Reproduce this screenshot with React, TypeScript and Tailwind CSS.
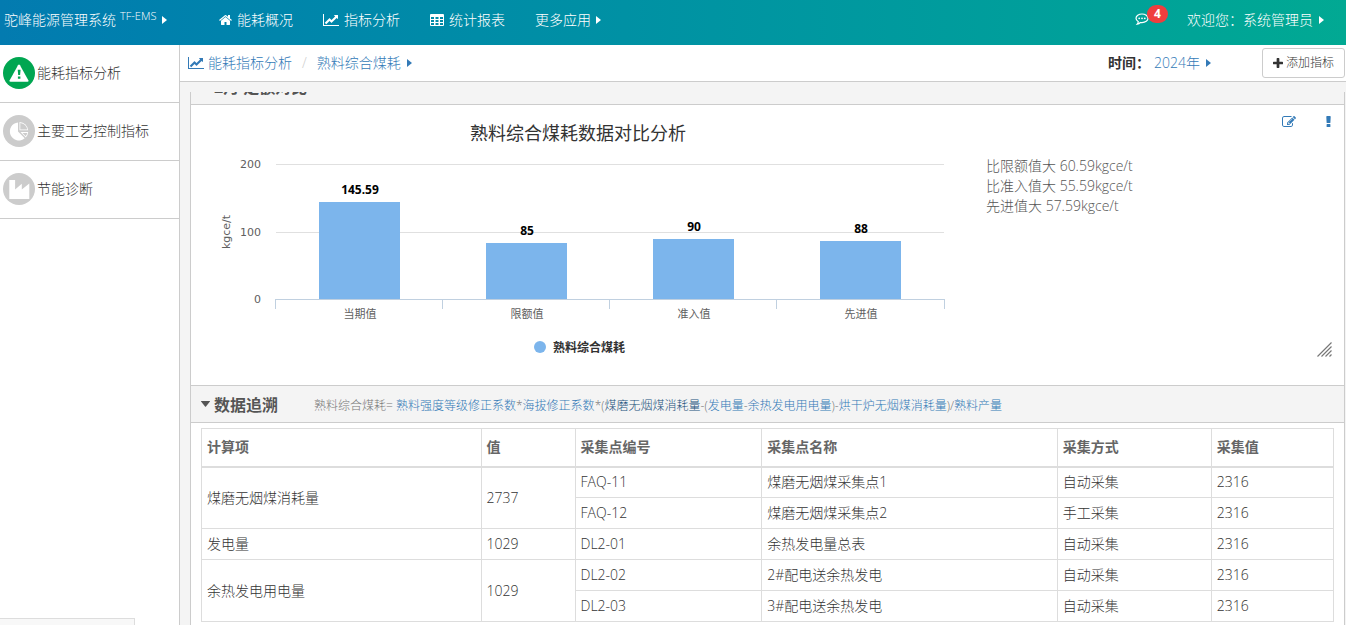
import type { ReactNode } from "react";

type IconProps = { className?: string };

function Glyph({ d, box, className = "" }: { d: string; box: string; className?: string }) {
  return (
    <svg viewBox={box} className={className} fill="currentColor" fillRule="evenodd" aria-hidden="true">
      <path d={d} />
    </svg>
  );
}

const HomeIcon = ({ className }: IconProps) => (
  <Glyph
    className={className}
    box="64 128 1664 1536"
    d="M1472 992v480q0 26-19 45t-45 19h-384v-384h-256v384h-384q-26 0-45-19t-19-45v-480q0-1 .5-3t.5-3l575-474 575 474q1 2 1 6zm223-69l-62 74q-8 9-21 11h-3q-13 0-21-7l-692-577-692 577q-12 8-24 7-13-2-21-11l-62-74q-8-10-7-23.5t11-21.5l719-599q32-26 76-26t76 26l244 204v-195q0-14 9-23t23-9h192q14 0 23 9t9 23v408l219 182q10 8 11 21.5t-7 23.5z"
  />
);
const LineChartIcon = ({ className }: IconProps) => (
  <Glyph
    className={className}
    box="0 128 2048 1536"
    d="M2048 1536v128h-2048v-1536h128v1408h1920zm-128-1248v435q0 21-19.5 29.5t-35.5-7.5l-121-121-633 633q-10 10-23 10t-23-10l-233-233-416 416-192-192 585-585q10-10 23-10t23 10l233 233 464-464-121-121q-16-16-7.5-35.5t29.5-19.5h435q14 0 23 9t9 23z"
  />
);
const TableIcon = ({ className }: IconProps) => (
  <Glyph
    className={className}
    box="0 0 14 12"
    d="M1 0h12a1 1 0 0 1 1 1v10a1 1 0 0 1-1 1H1a1 1 0 0 1-1-1V1a1 1 0 0 1 1-1zM1 3v2h3V3zM5.5 3v2h3V3zM10 3v2h3V3zM1 6v2h3V6zM5.500 6v2h3V6zM10 6v2h3V6zM1 9v2h3V9zM5.500 9v2h3V9zM10 9v2h3V9z"
  />
);
const EditIcon = ({ className }: IconProps) => (
  <Glyph
    className={className}
    box="0 128 1792 1408"
    d="M888 1184l116-116-152-152-116 116v56h96v96h56zm440-720q-16-16-33 1l-350 350q-17 17-1 33t33-1l350-350q17-17 1-33zm80 594v190q0 119-84.500 203.500t-203.500 84.500h-832q-119 0-203.500-84.500t-84.500-203.500v-832q0-119 84.500-203.500t203.500-84.500h832q63 0 117 25 15 7 18 23 3 17-9 29l-49 49q-14 14-32 8-23-6-45-6h-832q-66 0-113 47t-47 113v832q0 66 47 113t113 47h832q66 0 113-47t47-113v-126q0-13 9-22l64-64q15-15 35-7t20 29zm-96-738l288 288-672 672h-288v-288zm444 132l-92 92-288-288 92-92q28-28 68-28t68 28l152 152q28 28 28 68t-28 68z"
  />
);
const ExclamationIcon = ({ className }: IconProps) => (
  <Glyph
    className={className}
    box="0 0 5 11"
    d="M1 0h3q.7 0 .7.700l-.3 5.800q0 .5-.6.500H1.200q-.6 0-.6-.5L.3.700Q.3 0 1 0zM1.100 8h2.800q.5 0 .5.500v2q0 .5-.5.500H1.100q-.5 0-.5-.5v-2q0-.5.500-.5z"
  />
);
const PlusIcon = ({ className }: IconProps) => (
  <Glyph
    className={className}
    box="0 0 11 11"
    d="M4.700 0h1.600q.7 0 .7.700V4h3.300q.7 0 .7.700v1.600q0 .7-.7.700H7v3.300q0 .7-.7.700H4.700q-.7 0-.7-.7V7H.700Q0 7 0 6.300V4.700Q0 4 .7 4H4V.700Q4 0 4.700 0z"
  />
);
const CaretRight = ({ className = "" }: IconProps) => (
  <Glyph className={`h-2 w-[5px] ${className}`} box="0 0 5 8" d="M0 0l5 4-5 4z" />
);
const CaretDown = () => <Glyph className="h-[6px] w-[9px]" box="0 0 9 6" d="M.5 0h8q.5 0 .4.500L5 5.600q-.5.500-1 0L.1.500Q0 0 .5 0z" />;

const CommentIcon = () => (
  <svg viewBox="0 0 14 13" className="h-[13px] w-[14px]" aria-hidden="true">
    <path
      d="M7 1C3.700 1 1 2.900 1 5.300c0 1.400.9 2.600 2.300 3.400-.1.900-.5 1.700-1.100 2.400 1.300-.2 2.400-.8 3.200-1.600.5.100 1 .1 1.600.1 3.300 0 6-1.900 6-4.300S10.300 1 7 1z"
      fill="none"
      stroke="currentColor"
      strokeWidth="1.200"
    />
    <g fill="currentColor">
      <circle cx="4.200" cy="5.300" r=".9" />
      <circle cx="7" cy="5.300" r=".9" />
      <circle cx="9.800" cy="5.300" r=".9" />
    </g>
  </svg>
);

const WarningBadge = () => (
  <svg viewBox="0 0 32 32" className="size-8" aria-hidden="true">
    <circle cx="16" cy="16" r="16" fill="#00a651" />
    <path d="M15 8.200q1-1.600 2 0l8.300 15q.8 1.600-1 1.600H7.700q-1.800 0-1-1.600z" fill="#fff" />
    <path d="M14.700 12.800h2.900l-.5 5.200h-1.900zM14.900 19.500h2.500v2.300h-2.500z" fill="#00a651" />
  </svg>
);
const PieBadge = () => (
  <svg viewBox="0 0 32 32" className="size-8" aria-hidden="true">
    <circle cx="16" cy="16" r="16" fill="#ccc" />
    <path d="M15 7.500V16.500l6.700 6.800A9 9 0 1 1 15 7.500z" fill="#fff" />
    <path d="M16.500 7a9 9 0 0 1 8.700 8.300h-8.700z" fill="#fff" />
    <path d="M17.500 17h7.700a9 9 0 0 1-2.400 5.500z" fill="#fff" />
    <path d="M17.300 7.900a8 8 0 0 1 7 6.500h-7zM19.500 17.900h4.700a8 8 0 0 1-1.500 3.400z" fill="#ccc" />
  </svg>
);
const FactoryBadge = () => (
  <svg viewBox="0 0 32 32" className="size-8" aria-hidden="true">
    <circle cx="16" cy="16" r="16" fill="#ccc" />
    <path d="M6.300 7h5.800v9.500l6.700-5.700v5.700l7.500-6V26h-20z" fill="#fff" />
  </svg>
);

function NavLink({ icon, label, caret }: { icon?: ReactNode; label: string; caret?: boolean }) {
  return (
    <a href="#" className="flex items-center gap-[5px]">
      {icon}
      {label}
      {caret && <CaretRight />}
    </a>
  );
}

const sections = [
  { label: "能耗指标分析", icon: <WarningBadge /> },
  { label: "主要工艺控制指标", icon: <PieBadge /> },
  { label: "节能诊断", icon: <FactoryBadge /> },
];

const bars = [
  { label: "当期值", value: 145.59 },
  { label: "限额值", value: 85 },
  { label: "准入值", value: 90 },
  { label: "先进值", value: 88 },
];

const barHeight = (value: number) => Math.floor(value * 0.667);

function BarChart() {
  return (
    <svg
      viewBox="0 0 754 250"
      className="block w-full font-normal"
      role="img"
      aria-label="熟料综合煤耗数据对比分析"
      fontFamily="'DejaVu Sans', 'Noto Sans CJK SC', sans-serif"
      fontSize="11"
      fill="#606060"
    >
      <text x="377" y="25" textAnchor="middle" fontSize="18" fill="#333">
        熟料综合煤耗数据对比分析
      </text>
      {[200, 100, 0].map((tick) => (
        <g key={tick}>
          {tick > 0 && <path d={`M75 ${184.5 - tick * 0.675}H743`} stroke="#e0e0e0" shapeRendering="crispEdges" />}
          <text x="60" y={188 - tick * 0.675} textAnchor="end">
            {tick}
          </text>
        </g>
      ))}
      <text transform="translate(29 117) rotate(-90)" textAnchor="middle">
        kgce/t
      </text>
      {bars.map((bar, i) => (
        <g key={bar.label}>
          <rect x={118 + i * 167} y={184 - barHeight(bar.value)} width="81" height={barHeight(bar.value)} fill="#7cb5ec" />
          <text
            x={159 + i * 167}
            y={176 - barHeight(bar.value)}
            textAnchor="middle"
            fontFamily="'Noto Sans', sans-serif"
            fontSize="12"
            fontWeight="bold"
            fill="#000"
          >
            {bar.value}
          </text>
          <text x={159 + i * 167} y="203" textAnchor="middle">
            {bar.label}
          </text>
        </g>
      ))}
      <path
        d="M74.500 194V184.500H743.500V194M241.500 184.500V194M408.500 184.500V194M575.500 184.500V194"
        fill="none"
        stroke="#c0d0e0"
        shapeRendering="crispEdges"
      />
      <circle cx="339" cy="232" r="6" fill="#7cb5ec" />
      <text x="352" y="237" fontSize="12" fontWeight="bold" fill="#333">
        熟料综合煤耗
      </text>
    </svg>
  );
}

const comparisons = ["比限额值大 60.59kgce/t", "比准入值大 55.59kgce/t", "先进值大 57.59kgce/t"];

const groups = [
  {
    item: "煤磨无烟煤消耗量",
    value: "2737",
    points: [
      ["FAQ-11", "煤磨无烟煤采集点1", "自动采集", "2316"],
      ["FAQ-12", "煤磨无烟煤采集点2", "手工采集", "2316"],
    ],
  },
  { item: "发电量", value: "1029", points: [["DL2-01", "余热发电量总表", "自动采集", "2316"]] },
  {
    item: "余热发电用电量",
    value: "1029",
    points: [
      ["DL2-02", "2#配电送余热发电", "自动采集", "2316"],
      ["DL2-03", "3#配电送余热发电", "自动采集", "2316"],
    ],
  },
];

const cell = "border border-[#ddd] px-[5px]";

function DataTable() {
  return (
    <table className="w-full table-fixed border-collapse border border-[#ddd] text-left text-[#333]">
      <colgroup>
        <col className="w-[24.7%]" />
        <col className="w-[8.3%]" />
        <col className="w-[16.5%]" />
        <col className="w-[26.1%]" />
        <col className="w-[13.6%]" />
        <col />
      </colgroup>
      <thead>
        <tr className="h-[38px] border-b-2 border-[#ddd] text-[#666]">
          {["计算项", "值", "采集点编号", "采集点名称", "采集方式", "采集值"].map((h) => (
            <th key={h} scope="col" className="border-x border-[#ddd] px-[5px] font-bold">
              {h}
            </th>
          ))}
        </tr>
      </thead>
      <tbody>
        {groups.map((g) =>
          g.points.map((p, i) => (
            <tr key={p[0]} className="h-[31px]">
              {i === 0 && (
                <>
                  <td rowSpan={g.points.length} className={cell}>
                    {g.item}
                  </td>
                  <td rowSpan={g.points.length} className={cell}>
                    {g.value}
                  </td>
                </>
              )}
              {p.map((text, n) => (
                <td key={n} className={cell}>
                  {text}
                </td>
              ))}
            </tr>
          )),
        )}
      </tbody>
    </table>
  );
}

export default function App() {
  return (
    <div className="flex h-screen flex-col overflow-hidden bg-white font-['Open_Sans','Noto_Sans_CJK_SC',sans-serif] text-sm leading-5 font-light text-[#333]">
      <header className="flex h-[45px] shrink-0 items-center bg-linear-to-r from-[#037bb0] to-[#02a993] pb-1.5 pl-1 text-white">
        <a href="#" className="flex w-[215px] items-center">
          驼峰能源管理系统
          <span className="ml-1 pb-2 text-[11px]">TF-EMS</span>
          <CaretRight className="ml-1.5" />
        </a>
        <nav className="flex gap-[30px]">
          <NavLink icon={<HomeIcon className="h-3 w-[13px]" />} label="能耗概况" />
          <NavLink icon={<LineChartIcon className="h-3 w-4" />} label="指标分析" />
          <NavLink icon={<TableIcon className="h-3 w-[14px]" />} label="统计报表" />
          <NavLink label="更多应用" caret />
        </nav>
        <div className="ml-auto flex items-center gap-[38px] pr-[22px]">
          <button type="button" aria-label="消息" className="relative">
            <CommentIcon />
            <span className="absolute -top-2 left-3 flex h-[18px] w-[21px] items-center justify-center rounded-full bg-[#ef3e3e] text-xs font-bold">
              4
            </span>
          </button>
          <a href="#" className="flex items-center gap-1.5">
            欢迎您：系统管理员
            <CaretRight />
          </a>
        </div>
      </header>

      <div className="flex min-h-0 grow">
        <aside className="relative w-[180px] shrink-0 border-r border-[#ccc]">
          <ul>
            {sections.map((s) => (
              <li key={s.label} className="border-b border-[#ccc]">
                <a href="#" className="flex h-[57px] items-center gap-[2px] pb-0.5 pl-[3px]">
                  {s.icon}
                  {s.label}
                </a>
              </li>
            ))}
          </ul>
          <div className="absolute bottom-0 left-0 h-[7px] w-[135px] border-t border-r border-[#ddd] bg-[#f8f8f8]" />
        </aside>

        <main className="flex min-w-0 grow flex-col bg-[#f4f4f4]">
          <div className="flex h-[37px] shrink-0 items-center border-b border-[#ccc] bg-white pl-2 text-[#337ab7]">
            <a href="#" className="flex items-center gap-1">
              <LineChartIcon className="h-3 w-4" />
              能耗指标分析
            </a>
            <span className="px-[10px] text-[#ccc]">/</span>
            <a href="#" className="flex items-center gap-1.5">
              熟料综合煤耗
              <CaretRight />
            </a>
            <span className="ml-auto font-bold text-[#333]">时间：</span>
            <a href="#" className="mr-[51px] ml-1 flex items-center gap-1.5">
              2024年
              <CaretRight />
            </a>
            <button
              type="button"
              className="mr-px flex h-[30px] items-center gap-[3px] rounded-[3px] border border-[#ccc] bg-white px-[10px] text-xs text-[#333]"
            >
              <PlusIcon className="size-[10px]" />
              添加指标
            </button>
          </div>

          <div className="mt-[10px] mr-px ml-[10px] min-h-0 grow overflow-hidden border-x border-[#ccc] bg-white">
            <div className="flex h-[13px] items-end overflow-hidden border-b border-[#ccc] bg-[#f4f4f4] pl-[23px]">
              <h2 className="pb-[7px] text-base leading-5 font-bold text-[#555]">2月 定额对比</h2>
            </div>

            <section className="relative flex h-[280px] pt-[10px] pl-[10px]">
              <div className="w-[754px] shrink-0">
                <BarChart />
              </div>
              <ul className="pt-[41px] pl-[31px] text-[#555]">
                {comparisons.map((c) => (
                  <li key={c}>{c}</li>
                ))}
              </ul>
              <div className="ml-auto flex items-start gap-[30px] pt-px pr-[13px] text-[#337ab7]">
                <button type="button" aria-label="编辑">
                  <EditIcon className="h-[11px] w-[14px]" />
                </button>
                <button type="button" aria-label="说明">
                  <ExclamationIcon className="h-[11px] w-[5px]" />
                </button>
              </div>
              <svg viewBox="0 0 15 15" className="absolute right-3 bottom-7 size-[15px]" aria-hidden="true">
                <path d="M.5 14.500l14-14M4.500 14.500l10-10M8.500 14.500l6-6M12.500 14.500l2-2" stroke="#777" strokeWidth="1.200" />
              </svg>
            </section>

            <section>
              <div className="flex h-[38px] items-center border-y border-[#ccc] bg-[#f4f4f4] pl-[10px] text-[#555]">
                <CaretDown />
                <h2 className="ml-1 pt-0.5 text-base font-bold">数据追溯</h2>
                <p className="ml-9 pt-1 text-xs whitespace-nowrap text-[#777]">
                  熟料综合煤耗= <a href="#" className="text-[#337ab7]">熟料强度等级修正系数</a>*
                  <a href="#" className="text-[#337ab7]">海拔修正系数</a>*(
                  <a href="#" className="text-[#23527c]">煤磨无烟煤消耗量</a>-(
                  <a href="#" className="text-[#337ab7]">发电量</a>-
                  <a href="#" className="text-[#337ab7]">余热发电用电量</a>)-
                  <a href="#" className="text-[#337ab7]">烘干炉无烟煤消耗量</a>)/
                  <a href="#" className="text-[#337ab7]">熟料产量</a>
                </p>
              </div>
              <div className="px-[10px] pt-[5px]">
                <DataTable />
              </div>
            </section>
          </div>
        </main>
      </div>
    </div>
  );
}
